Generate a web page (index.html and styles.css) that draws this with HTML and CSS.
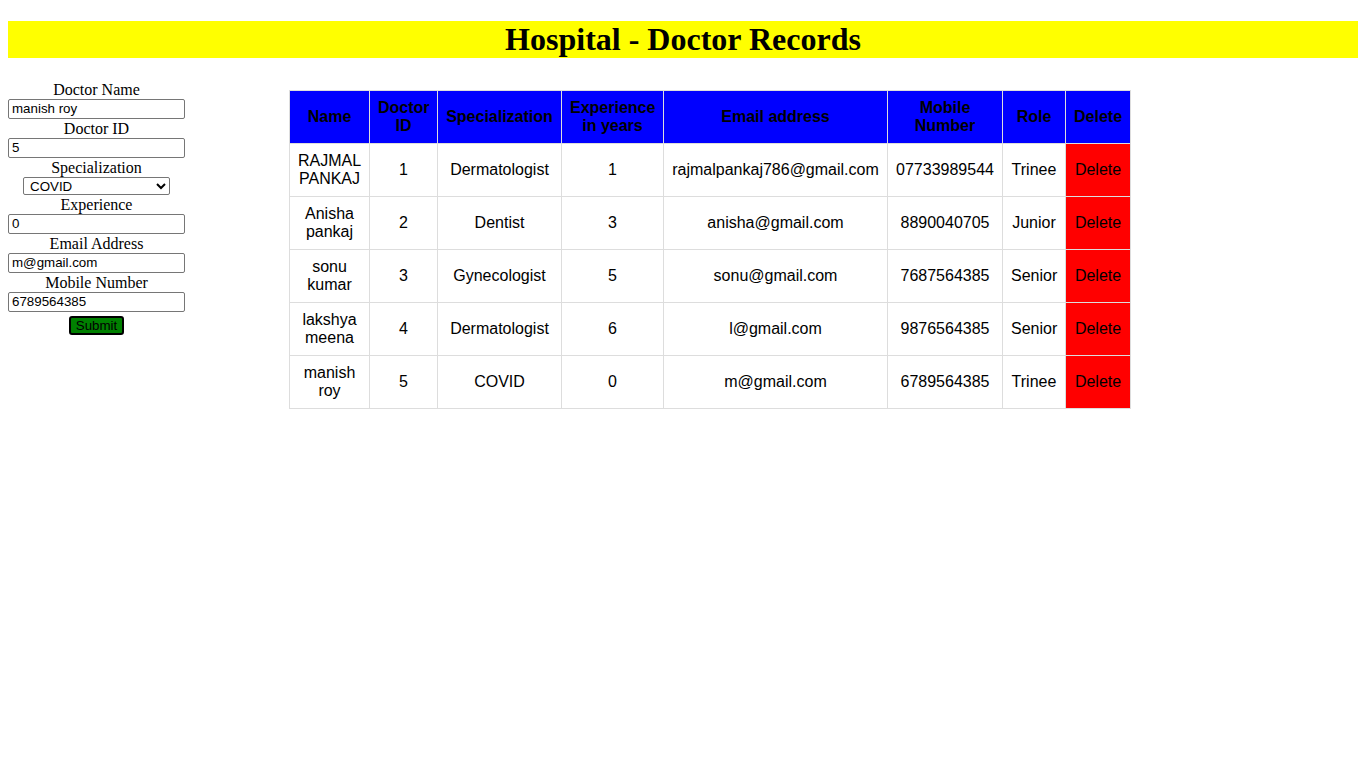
FILE: index.html
```html
<!DOCTYPE html>
<html>
<head>
<meta charset="utf-8">
<title>Hospital - Doctor Records</title>
<link rel="stylesheet" href="styles.css">
</head>
<body>
<h1 class="title">Hospital - Doctor Records</h1>
<div class="main">
  <form class="doc-form">
    <label class="lbl">Doctor Name</label>
    <input class="fld" type="text" value="manish roy">
    <label class="lbl">Doctor ID</label>
    <input class="fld" type="text" value="5">
    <label class="lbl">Specialization</label>
    <select class="sel">
      <option>COVID</option>
    </select>
    <label class="lbl">Experience</label>
    <input class="fld" type="text" value="0">
    <label class="lbl">Email Address</label>
    <input class="fld" type="text" value="m@gmail.com">
    <label class="lbl">Mobile Number</label>
    <input class="fld" type="text" value="6789564385">
    <button class="submit" type="button">Submit</button>
  </form>
  <table class="records">
    <colgroup>
      <col class="c-name"><col class="c-id"><col class="c-spec"><col class="c-exp"><col class="c-email"><col class="c-mob"><col class="c-role"><col class="c-del">
    </colgroup>
    <thead>
      <tr><th>Name</th><th>Doctor ID</th><th>Specialization</th><th>Experience in years</th><th>Email address</th><th>Mobile Number</th><th>Role</th><th>Delete</th></tr>
    </thead>
    <tbody>
      <tr><td>RAJMAL PANKAJ</td><td>1</td><td>Dermatologist</td><td>1</td><td>rajmalpankaj786@gmail.com</td><td>07733989544</td><td>Trinee</td><td class="del">Delete</td></tr>
      <tr><td>Anisha pankaj</td><td>2</td><td>Dentist</td><td>3</td><td>anisha@gmail.com</td><td>8890040705</td><td>Junior</td><td class="del">Delete</td></tr>
      <tr><td>sonu kumar</td><td>3</td><td>Gynecologist</td><td>5</td><td>sonu@gmail.com</td><td>7687564385</td><td>Senior</td><td class="del">Delete</td></tr>
      <tr><td>lakshya meena</td><td>4</td><td>Dermatologist</td><td>6</td><td>l@gmail.com</td><td>9876564385</td><td>Senior</td><td class="del">Delete</td></tr>
      <tr><td>manish roy</td><td>5</td><td>COVID</td><td>0</td><td>m@gmail.com</td><td>6789564385</td><td>Trinee</td><td class="del">Delete</td></tr>
    </tbody>
  </table>
</div>
</body>
</html>
```
FILE: styles.css
```css
body {
  margin: 0 8px 8px;
  font-family: "Liberation Serif", "Times New Roman", serif;
  font-size: 16px;
  color: #000;
  background: #fff;
}
.title {
  margin: 21px 0 21.5px;
  background: #ffff00;
  text-align: center;
  font-size: 32px;
  font-weight: bold;
  line-height: 37px;
}
.main {
  display: flex;
  align-items: flex-start;
  gap: 104px;
}
.doc-form {
  width: 177px;
  display: flex;
  flex-direction: column;
  align-items: center;
  margin: 0;
}
.lbl {
  display: block;
  line-height: 19px;
  height: 19px;
  font-size: 16px;
}
.fld {
  box-sizing: border-box;
  width: 177px;
  height: 20px;
  margin: 0;
  padding: 1px 3px;
  border: 1px solid #767676;
  border-radius: 2px;
  font-family: "Liberation Sans", Arial, sans-serif;
  font-size: 13.33px;
  color: #000;
  background: #fff;
}
.sel {
  box-sizing: border-box;
  width: 147px;
  height: 18px;
  margin: 0;
  padding: 0 0 0 2px;
  border: 1px solid #767676;
  border-radius: 2px;
  font-family: "Liberation Sans", Arial, sans-serif;
  font-size: 13.33px;
  color: #000;
  background: #fff;
}
.submit {
  margin-top: 4.5px;
  box-sizing: border-box;
  width: 55px;
  height: 19px;
  padding: 0;
  background: #008000;
  border: 2px solid #000;
  border-radius: 3px;
  font-family: "Liberation Sans", Arial, sans-serif;
  font-size: 13.33px;
  color: #000;
  line-height: 14px;
}
.records {
  margin-top: 10.5px;
  border-collapse: collapse;
  table-layout: fixed;
  width: 841px;
  font-family: "Liberation Sans", Arial, sans-serif;
  font-size: 16px;
}
.c-name { width: 80px; }
.c-id { width: 68px; }
.c-spec { width: 124px; }
.c-exp { width: 102px; }
.c-email { width: 224px; }
.c-mob { width: 115px; }
.c-role { width: 63px; }
.c-del { width: 65px; }
.records th,
.records td {
  border: 1px solid #dddddd;
  padding: 8px;
  text-align: center;
  vertical-align: middle;
  height: 36px;
  line-height: 18px;
}
.records th {
  background: #0000ff;
  color: #000;
  font-weight: bold;
}
.records td.del {
  background: #ff0000;
  color: #000;
}
```
